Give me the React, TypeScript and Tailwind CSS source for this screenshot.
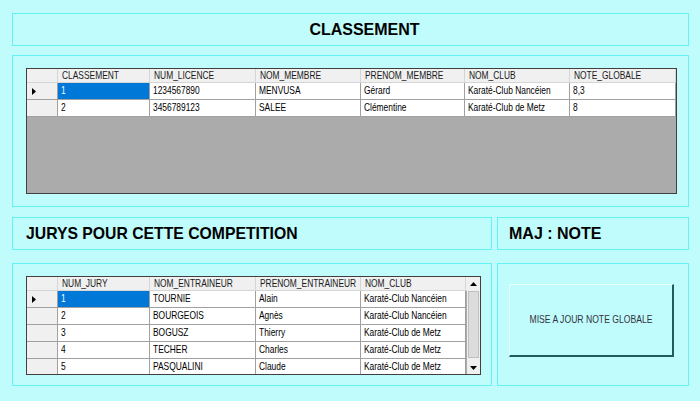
import React from 'react';

type Col = { label: string; width: number };

const classementCols: Col[] = [
  { label: 'CLASSEMENT', width: 92 },
  { label: 'NUM_LICENCE', width: 106 },
  { label: 'NOM_MEMBRE', width: 105 },
  { label: 'PRENOM_MEMBRE', width: 104 },
  { label: 'NOM_CLUB', width: 105 },
  { label: 'NOTE_GLOBALE', width: 106 },
];

const classementRows = [
  ['1', '1234567890', 'MENVUSA', 'Gérard', 'Karaté-Club Nancéien', '8,3'],
  ['2', '3456789123', 'SALEE', 'Clémentine', 'Karaté-Club de Metz', '8'],
];

const juryCols: Col[] = [
  { label: 'NUM_JURY', width: 92 },
  { label: 'NOM_ENTRAINEUR', width: 106 },
  { label: 'PRENOM_ENTRAINEUR', width: 105 },
  { label: 'NOM_CLUB', width: 105 },
];

const juryRows = [
  ['1', 'TOURNIE', 'Alain', 'Karaté-Club Nancéien'],
  ['2', 'BOURGEOIS', 'Agnès', 'Karaté-Club Nancéien'],
  ['3', 'BOGUSZ', 'Thierry', 'Karaté-Club de Metz'],
  ['4', 'TECHER', 'Charles', 'Karaté-Club de Metz'],
  ['5', 'PASQUALINI', 'Claude', 'Karaté-Club de Metz'],
];

// narrow winforms-like text: Arial squeezed horizontally
const Txt = ({ children }: { children: React.ReactNode }) => (
  <span className="inline-block origin-left scale-x-[0.8] whitespace-nowrap">{children}</span>
);

const RowArrow = () => (
  <svg width="4" height="7" viewBox="0 0 4 7">
    <path d="M0 0 L4 3.5 L0 7 Z" fill="#000" />
  </svg>
);

const Grid = ({
  cols,
  rows,
  scrollbar,
}: {
  cols: Col[];
  rows: string[][];
  scrollbar?: boolean;
}) => (
  <div className="flex h-full w-full border border-[#404040] bg-[#ababab] font-['Liberation_Sans',Arial,sans-serif] text-[10.5px] text-black">
    <div className="flex min-w-0 flex-1 flex-col overflow-hidden">
      {/* header */}
      <div className="flex h-[14px] shrink-0 bg-[#f0f0f0] text-[#1a1a1a]">
        <div className="w-[31px] shrink-0 border-r border-b border-[#d5d5d5]" />
        {cols.map((c) => (
          <div
            key={c.label}
            style={{ width: c.width }}
            className="flex shrink-0 items-center overflow-hidden border-r border-b border-[#d5d5d5] pl-[4px] leading-none"
          >
            <Txt>{c.label}</Txt>
          </div>
        ))}
        <div className="flex-1 border-b border-[#d5d5d5]" />
      </div>
      {rows.map((r, i) => (
        <div key={i} className="flex h-[17px] shrink-0">
          <div className="flex w-[31px] shrink-0 items-center border-r border-b border-[#a0a0a0] bg-[#f0f0f0] pl-[5px]">
            {i === 0 && <RowArrow />}
          </div>
          {r.map((v, j) => (
            <div
              key={j}
              style={{ width: cols[j].width }}
              className={`flex shrink-0 items-center overflow-hidden border-r border-b border-[#a0a0a0] pl-[3px] ${
                i === 0 && j === 0 ? 'bg-[#0078d7] text-white' : 'bg-white'
              }`}
            >
              <Txt>{v}</Txt>
            </div>
          ))}
        </div>
      ))}
    </div>
    {scrollbar && (
      <div className="flex w-[13px] shrink-0 flex-col bg-[#f0f0f0]">
        <div className="flex h-[14px] items-center justify-center">
          <svg width="7" height="4" viewBox="0 0 7 4">
            <path d="M0 4 L3.5 0 L7 4 Z" fill="#000" />
          </svg>
        </div>
        <div className="mx-[1px] flex-1 border border-[#c0c0c0] bg-[#dcdcdc]" />
        <div className="h-[3px]" />
        <div className="flex h-[13px] items-center justify-center">
          <svg width="7" height="4" viewBox="0 0 7 4">
            <path d="M0 0 L3.5 4 L7 0 Z" fill="#000" />
          </svg>
        </div>
      </div>
    )}
  </div>
);

const Panel = ({ className = '', children }: { className?: string; children?: React.ReactNode }) => (
  <div className={`border border-[#66f2f4] ${className}`}>{children}</div>
);

export default function App() {
  return (
    <div className="h-[401px] w-[700px] overflow-hidden bg-[#c0fcfc] pl-[12px] pr-[11px] pt-[13px] font-['Liberation_Sans',Arial,sans-serif]">
      <Panel className="flex h-[33px] items-center justify-center pl-[28px]">
        <span className="text-[16px] font-bold text-black">CLASSEMENT</span>
      </Panel>

      <Panel className="mt-[9px] h-[152px] pl-[13px] pr-[11px] pt-[12px] pb-[12px]">
        <Grid cols={classementCols} rows={classementRows} />
      </Panel>

      <div className="mt-[10px] flex gap-[5px]">
        <div className="flex w-[480px] flex-col gap-[13px]">
          <Panel className="flex h-[33px] items-center pl-[13px]">
            <span className="text-[15.75px] font-bold text-black">JURYS POUR CETTE COMPETITION</span>
          </Panel>
          <Panel className="h-[123px] pl-[13px] pr-[10px] pt-[12px] pb-[10px]">
            <Grid cols={juryCols} rows={juryRows} scrollbar />
          </Panel>
        </div>
        <div className="flex flex-1 flex-col gap-[13px]">
          <Panel className="flex h-[33px] items-center pl-[11px]">
            <span className="text-[16px] font-bold text-black">MAJ : NOTE</span>
          </Panel>
          <Panel className="h-[123px] pl-[11px] pr-[14px] pt-[20px]">
            <button className="flex h-[73px] w-full items-center justify-center border-t border-l border-t-[#e6ffff] border-l-[#e6ffff] border-b-2 border-r-2 border-b-[#1f5c5c] border-r-[#1f5c5c] bg-[#c0fcfc] text-[10.5px] text-[#333340]">
              <span className="inline-block scale-x-[0.82] whitespace-nowrap">MISE A JOUR NOTE GLOBALE</span>
            </button>
          </Panel>
        </div>
      </div>
    </div>
  );
}
